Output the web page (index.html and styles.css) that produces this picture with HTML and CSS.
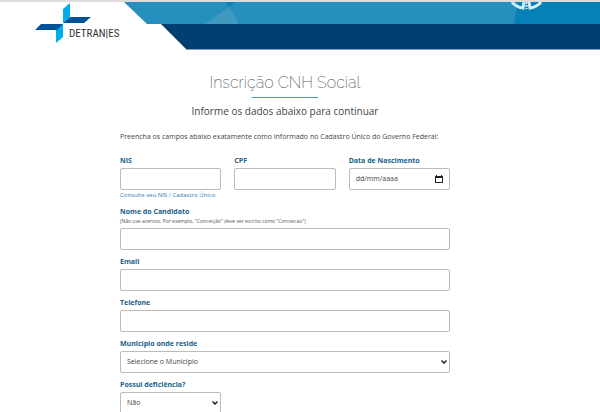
FILE: index.html
```html
<!DOCTYPE html>
<html lang="pt-BR">
<head>
<meta charset="utf-8">
<meta name="viewport" content="width=device-width, initial-scale=1">
<title>Inscrição CNH Social</title>
<link rel="stylesheet" href="styles.css">
</head>
<body>
<header class="header">
  <a class="logo" href="#">
    <svg class="logo-mark" viewBox="0 0 56 41" aria-hidden="true">
      <path fill="#00aeef" d="M28 6 35 0v14l-7 6zM21 27l7-6v13l-7 6z"/>
      <path fill="#00539b" d="M28 20l7-6h21l-7 6zM0 27l6-6h22l-6 6z"/>
    </svg>
    <span class="logo-name">DETRAN|ES</span>
  </a>
  <svg class="banner" viewBox="0 0 476 48" preserveAspectRatio="xMinYMin slice" aria-hidden="true">
    <path fill="#268fbd" d="M0 0h476v22H23z"/>
    <path fill="#0581bd" d="M102 0h9l-6 5z"/>
    <path fill="#4199c1" d="M105 5 81 22h34z"/>
    <path fill="#0581b8" d="M394 0h82v22h-86z"/>
    <g fill="none" stroke="#d5ebf5">
      <path stroke-width="3" d="M388 0q4 5 11 6l1-6M417 0q-4 5-11 6l-1-6"/>
      <path stroke-width="2" stroke-dasharray="2 1" d="M402.500 0v7"/>
    </g>
    <path fill="#003f70" d="M37 22h439v25H62z"/>
    <path stroke="#8795b8" d="M62 47.500h414"/>
  </svg>
</header>
<main class="page">
  <h1 class="title">Inscrição CNH Social</h1>
  <p class="subtitle">Informe os dados abaixo para continuar</p>
  <p class="intro">Preencha os campos abaixo exatamente como informado no Cadastro Único do Governo Federal:</p>
  <form class="form">
    <div class="row">
      <div class="field">
        <label for="nis">NIS</label>
        <input class="control" id="nis" type="text">
        <a class="help" href="#">Consulte seu NIS / Cadastro Único</a>
      </div>
      <div class="field">
        <label for="cpf">CPF</label>
        <input class="control" id="cpf" type="text">
      </div>
      <div class="field">
        <label for="nascimento">Data de Nascimento</label>
        <div class="control date">
          <input class="date-input" id="nascimento" type="text" placeholder="dd/mm/aaaa">
          <button class="date-button" type="button" aria-label="Abrir calendário">
            <svg viewBox="0 0 8 8" aria-hidden="true"><path fill="#222" fill-rule="evenodd" d="M1 0h1v1h4V0h1v1h1v7H0V1h1zM1 3v4h6V3z"/></svg>
          </button>
        </div>
      </div>
    </div>
    <div class="field">
      <label for="nome">Nome do Candidato</label>
      <small class="hint">(Não use acentos. Por exemplo, "Conceição" deve ser escrito como "Conceicao")</small>
      <input class="control" id="nome" type="text">
    </div>
    <div class="field">
      <label for="email">Email</label>
      <input class="control" id="email" type="email">
    </div>
    <div class="field">
      <label for="telefone">Telefone</label>
      <input class="control" id="telefone" type="tel">
    </div>
    <div class="field">
      <label for="municipio">Município onde reside</label>
      <div class="select">
        <select class="control" id="municipio"><option>Selecione o Município</option></select>
        <svg class="chevron" viewBox="0 0 6 4" aria-hidden="true"><path d="M.5.5 3 3 5.500.5"/></svg>
      </div>
    </div>
    <div class="row">
      <div class="field">
        <label for="deficiencia">Possui deficiência?</label>
        <div class="select">
          <select class="control" id="deficiencia"><option>Não</option></select>
          <svg class="chevron" viewBox="0 0 6 4" aria-hidden="true"><path d="M.5.5 3 3 5.500.5"/></svg>
        </div>
      </div>
    </div>
  </form>
</main>
</body>
</html>
```
FILE: styles.css
```css
* { box-sizing: border-box; }
body {
  margin: 0;
  background: #fff;
  color: #444;
  font: 7px/12px "Open Sans", sans-serif;
}
.header {
  display: flex;
  border-top: 2px solid #dcdcdc;
}
.logo {
  display: flex;
  flex: none;
  width: 124px;
  padding-left: 35px;
  color: #333;
  text-decoration: none;
}
.logo-mark {
  flex: none;
  width: 56px;
  height: 41px;
  margin-top: 1px;
}
.logo-name {
  margin: 25px 0 0 -22px;
  font: 11px/14px "Roboto Condensed", "Open Sans Condensed", "Liberation Sans", sans-serif;
}
.banner {
  flex: 1;
  min-width: 0;
  height: 48px;
}
.page {
  max-width: 360px;
  margin: 0 auto;
  padding: 20px 30px 0 0;
}
.title {
  margin: 0;
  color: #555;
  font: 200 16px/26px Raleway, Lato, sans-serif;
  text-align: center;
}
.title::after {
  content: "";
  display: block;
  width: 66px;
  height: 1px;
  margin: 1px auto 0;
  background: #4a8fd0;
}
.subtitle {
  margin: 5px 0 0;
  font-size: 10px;
  line-height: 16px;
  text-align: center;
}
.intro {
  margin: 12px 0 11px;
  line-height: 12px;
  white-space: nowrap;
}
.form {
  display: grid;
  gap: 5px;
}
.row {
  display: grid;
  grid-template-columns: repeat(3, 1fr);
  column-gap: 13px;
}
.field {
  display: flex;
  flex-direction: column;
  min-width: 0;
}
label {
  color: #18608a;
  font-weight: 700;
  line-height: 14px;
}
.control {
  width: 100%;
  height: 22px;
  margin: 0;
  padding: 0 6px;
  border: 1px solid #bbb;
  border-radius: 2px;
  background: #fff;
  color: #444;
  font: inherit;
}
.help {
  color: #337ab7;
  font-size: 6px;
  line-height: 10px;
  text-decoration: none;
  white-space: nowrap;
}
.hint {
  margin: -2px 0 2px;
  color: #555;
  font-size: 5px;
  line-height: 9px;
}
.date {
  display: flex;
  align-items: center;
}
.date-input {
  flex: 1;
  min-width: 0;
  padding: 0;
  border: 0;
  background: none;
  font: inherit;
}
.date-input::placeholder { color: #444; }
.date-button {
  display: flex;
  padding: 0;
  border: 0;
  background: none;
}
.date-button svg {
  width: 8px;
  height: 8px;
}
.select {
  display: grid;
  align-items: center;
}
.select > * { grid-area: 1 / 1; }
.select .control { appearance: none; }
.chevron {
  justify-self: end;
  width: 6px;
  height: 4px;
  margin-right: 3px;
  fill: none;
  stroke: #222;
  stroke-width: 1.5;
  pointer-events: none;
}
```
